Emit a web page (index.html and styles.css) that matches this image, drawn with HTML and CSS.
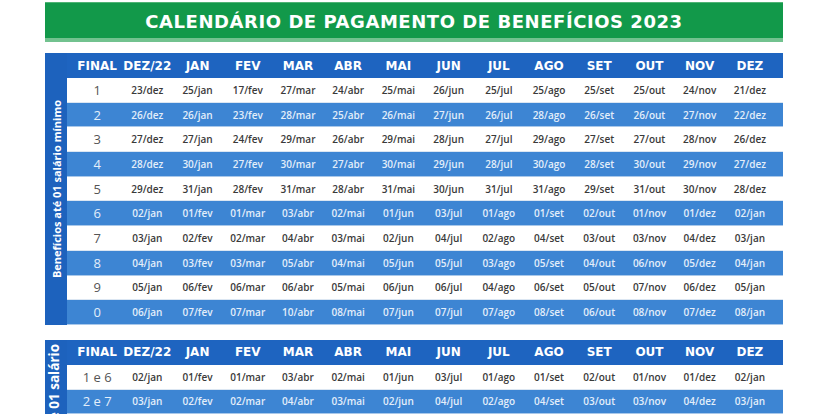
FILE: index.html
```html
<!DOCTYPE html>
<html lang="pt-BR">
<head>
<meta charset="utf-8">
<title>Calendário de Pagamento de Benefícios 2023</title>
<link rel="stylesheet" href="styles.css">
</head>
<body>
<div class="page">
  <div class="title">CALENDÁRIO DE PAGAMENTO DE BENEFÍCIOS 2023</div>

  <div class="table t1">
    <div class="side"><span class="side-label">Benefícios até 01 salário mínimo</span></div>
    <div class="grid">
      <div class="row head"><span>FINAL</span><span>DEZ/22</span><span>JAN</span><span>FEV</span><span>MAR</span><span>ABR</span><span>MAI</span><span>JUN</span><span>JUL</span><span>AGO</span><span>SET</span><span>OUT</span><span>NOV</span><span>DEZ</span></div>
      <div class="row light"><span class="fin">1</span><span>23/dez</span><span>25/jan</span><span>17/fev</span><span>27/mar</span><span>24/abr</span><span>25/mai</span><span>26/jun</span><span>25/jul</span><span>25/ago</span><span>25/set</span><span>25/out</span><span>24/nov</span><span>21/dez</span></div>
      <div class="row blue"><span class="fin">2</span><span>26/dez</span><span>26/jan</span><span>23/fev</span><span>28/mar</span><span>25/abr</span><span>26/mai</span><span>27/jun</span><span>26/jul</span><span>28/ago</span><span>26/set</span><span>26/out</span><span>27/nov</span><span>22/dez</span></div>
      <div class="row light"><span class="fin">3</span><span>27/dez</span><span>27/jan</span><span>24/fev</span><span>29/mar</span><span>26/abr</span><span>29/mai</span><span>28/jun</span><span>27/jul</span><span>29/ago</span><span>27/set</span><span>27/out</span><span>28/nov</span><span>26/dez</span></div>
      <div class="row blue"><span class="fin">4</span><span>28/dez</span><span>30/jan</span><span>27/fev</span><span>30/mar</span><span>27/abr</span><span>30/mai</span><span>29/jun</span><span>28/jul</span><span>30/ago</span><span>28/set</span><span>30/out</span><span>29/nov</span><span>27/dez</span></div>
      <div class="row light"><span class="fin">5</span><span>29/dez</span><span>31/jan</span><span>28/fev</span><span>31/mar</span><span>28/abr</span><span>31/mai</span><span>30/jun</span><span>31/jul</span><span>31/ago</span><span>29/set</span><span>31/out</span><span>30/nov</span><span>28/dez</span></div>
      <div class="row blue"><span class="fin">6</span><span>02/jan</span><span>01/fev</span><span>01/mar</span><span>03/abr</span><span>02/mai</span><span>01/jun</span><span>03/jul</span><span>01/ago</span><span>01/set</span><span>02/out</span><span>01/nov</span><span>01/dez</span><span>02/jan</span></div>
      <div class="row light"><span class="fin">7</span><span>03/jan</span><span>02/fev</span><span>02/mar</span><span>04/abr</span><span>03/mai</span><span>02/jun</span><span>04/jul</span><span>02/ago</span><span>04/set</span><span>03/out</span><span>03/nov</span><span>04/dez</span><span>03/jan</span></div>
      <div class="row blue"><span class="fin">8</span><span>04/jan</span><span>03/fev</span><span>03/mar</span><span>05/abr</span><span>04/mai</span><span>05/jun</span><span>05/jul</span><span>03/ago</span><span>05/set</span><span>04/out</span><span>06/nov</span><span>05/dez</span><span>04/jan</span></div>
      <div class="row light"><span class="fin">9</span><span>05/jan</span><span>06/fev</span><span>06/mar</span><span>06/abr</span><span>05/mai</span><span>06/jun</span><span>06/jul</span><span>04/ago</span><span>06/set</span><span>05/out</span><span>07/nov</span><span>06/dez</span><span>05/jan</span></div>
      <div class="row blue"><span class="fin">0</span><span>06/jan</span><span>07/fev</span><span>07/mar</span><span>10/abr</span><span>08/mai</span><span>07/jun</span><span>07/jul</span><span>07/ago</span><span>08/set</span><span>06/out</span><span>08/nov</span><span>07/dez</span><span>08/jan</span></div>
    </div>
  </div>

  <div class="table t2">
    <div class="side side-top"><span class="side-label">Benefícios acima de 01 salário</span></div>
    <div class="grid">
      <div class="row head"><span>FINAL</span><span>DEZ/22</span><span>JAN</span><span>FEV</span><span>MAR</span><span>ABR</span><span>MAI</span><span>JUN</span><span>JUL</span><span>AGO</span><span>SET</span><span>OUT</span><span>NOV</span><span>DEZ</span></div>
      <div class="row light"><span class="fin">1 e 6</span><span>02/jan</span><span>01/fev</span><span>01/mar</span><span>03/abr</span><span>02/mai</span><span>01/jun</span><span>03/jul</span><span>01/ago</span><span>01/set</span><span>02/out</span><span>01/nov</span><span>01/dez</span><span>02/jan</span></div>
      <div class="row blue"><span class="fin">2 e 7</span><span>03/jan</span><span>02/fev</span><span>02/mar</span><span>04/abr</span><span>03/mai</span><span>02/jun</span><span>04/jul</span><span>02/ago</span><span>04/set</span><span>03/out</span><span>03/nov</span><span>04/dez</span><span>03/jan</span></div>
      <div class="row light"><span class="fin">3 e 8</span><span>04/jan</span><span>03/fev</span><span>03/mar</span><span>05/abr</span><span>04/mai</span><span>05/jun</span><span>05/jul</span><span>03/ago</span><span>05/set</span><span>04/out</span><span>06/nov</span><span>05/dez</span><span>04/jan</span></div>
      <div class="row blue"><span class="fin">4 e 9</span><span>05/jan</span><span>06/fev</span><span>06/mar</span><span>06/abr</span><span>05/mai</span><span>06/jun</span><span>06/jul</span><span>04/ago</span><span>06/set</span><span>05/out</span><span>07/nov</span><span>06/dez</span><span>05/jan</span></div>
      <div class="row light"><span class="fin">5 e 0</span><span>06/jan</span><span>07/fev</span><span>07/mar</span><span>10/abr</span><span>08/mai</span><span>07/jun</span><span>07/jul</span><span>07/ago</span><span>08/set</span><span>06/out</span><span>08/nov</span><span>07/dez</span><span>08/jan</span></div>
    </div>
  </div>
</div>
</body>
</html>
```
FILE: styles.css
```css
* { box-sizing: border-box; }
html, body { margin: 0; padding: 0; background: #ffffff; }
body { font-family: "Open Sans", "DejaVu Sans", sans-serif; }

.page {
  width: 828px;
  padding: 2px 45px 0 45px;
}

.title {
  height: 40px;
  background: #12994a;
  border-top: 1px solid #4fb475;
  border-bottom: 4px solid #72c28f;
  color: #ffffff;
  font-family: "DejaVu Sans", sans-serif;
  font-weight: bold;
  font-size: 18px;
  letter-spacing: 0.55px;
  display: flex;
  align-items: center;
  justify-content: center;
  padding-top: 1px;
}

.table {
  display: flex;
  margin-top: 11px;
}
.t2 { margin-top: 15px; }

.side {
  width: 22px;
  background: #1d62bd;
  display: flex;
  align-items: center;
  justify-content: center;
  overflow: hidden;
}
.side-top { justify-content: flex-start; }
.side-label {
  writing-mode: vertical-rl;
  transform: rotate(180deg);
  color: #ffffff;
  font-family: "Open Sans", sans-serif;
  font-weight: bold;
  font-size: 11px;
  white-space: nowrap;
}
.side-top .side-label { margin-top: 4px; font-size: 13.5px; }

.grid { flex: 1; display: flex; flex-direction: column; }

.row {
  display: grid;
  grid-template-columns: repeat(14, 1fr);
  padding: 0 8px 0 5px;
  height: 24.7px;
  align-items: center;
  text-align: center;
  font-size: 10px;
  font-weight: 600;
}
.row.head {
  height: 25px;
  background: #1e64c0;
  color: #ffffff;
  font-family: "DejaVu Sans", sans-serif;
  font-weight: bold;
  font-size: 12px;
}
.row.light {
  background: #ffffff;
  color: #3a3a3a;
  border-bottom: 1px solid #dbe6f2;
}
.row.blue {
  background: #3d85d3;
  color: #e3eefa;
  border-bottom: 1px solid #a9c8ea;
}
.fin {
  font-size: 13px;
  font-weight: 400;
}
.light .fin { color: #555555; }
```
